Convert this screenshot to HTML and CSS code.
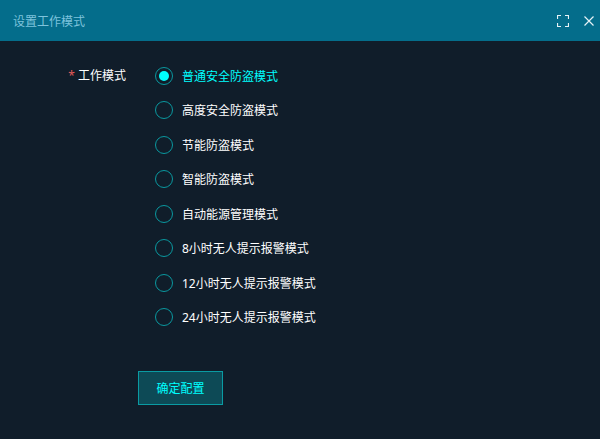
FILE: index.html
```html
<!DOCTYPE html>
<html lang="zh-CN">
<head>
    <meta charset="UTF-8">
    <meta name="viewport" content="width=device-width, initial-scale=1.0">
    <title>设置工作模式</title>
    <link rel="stylesheet" href="styles.css">
</head>
<body>
    <div class="dialog">
        <div class="dialog-header">
            <span class="dialog-title">设置工作模式</span>
            <div class="dialog-tools">
                <!-- fullscreen -->
                <svg class="tool-icon" width="12" height="12" viewBox="0 0 12 12">
                    <path d="M0.5 4V0.5H4M8 0.5H11.5V4M11.5 8V11.5H8M4 11.5H0.5V8" fill="none" stroke="#e6f2f6" stroke-width="1.2"/>
                </svg>
                <!-- close -->
                <svg class="tool-icon" width="10" height="10" viewBox="0 0 10 10">
                    <path d="M0.5 0.5L9.5 9.5M9.5 0.5L0.5 9.5" fill="none" stroke="#e6f2f6" stroke-width="1.2"/>
                </svg>
            </div>
        </div>
        <div class="dialog-body">
            <div class="form-row">
                <label class="form-label"><span class="required">*</span>工作模式</label>
                <div class="radio-list">
                    <div class="radio-item checked"><span class="radio-dot"></span><span>普通安全防盗模式</span></div>
                    <div class="radio-item"><span class="radio-dot"></span><span>高度安全防盗模式</span></div>
                    <div class="radio-item"><span class="radio-dot"></span><span>节能防盗模式</span></div>
                    <div class="radio-item"><span class="radio-dot"></span><span>智能防盗模式</span></div>
                    <div class="radio-item"><span class="radio-dot"></span><span>自动能源管理模式</span></div>
                    <div class="radio-item"><span class="radio-dot"></span><span>8小时无人提示报警模式</span></div>
                    <div class="radio-item"><span class="radio-dot"></span><span>12小时无人提示报警模式</span></div>
                    <div class="radio-item"><span class="radio-dot"></span><span>24小时无人提示报警模式</span></div>
                </div>
            </div>
            <button class="confirm-button">确定配置</button>
        </div>
    </div>
</body>
</html>
```

FILE: styles.css
```css
body {
    margin: 0;
    padding: 0;
    background-color: #101d2a;
    font-family: "Noto Sans", "Noto Sans CJK SC", sans-serif;
    font-size: 12px;
    color: #ffffff;
}
.dialog {
    width: 600px;
    height: 439px;
    overflow: hidden;
}
.dialog-header {
    display: flex;
    justify-content: space-between;
    align-items: center;
    height: 41px;
    padding: 0 6px 0 13px;
    box-sizing: border-box;
    background-color: #046d8b;
}
.dialog-title {
    color: #7ec3dc;
}
.dialog-tools {
    display: flex;
    align-items: center;
    gap: 15px;
}
.tool-icon {
    display: block;
}
.dialog-body {
    padding-top: 17.4px;
}
.form-row {
    display: flex;
}
.form-label {
    width: 126px;
    height: 35px;
    line-height: 35px;
    text-align: right;
    margin-right: 29px;
}
.required {
    color: #e05a5a;
    margin-right: 3px;
}
.radio-list {
    display: flex;
    flex-direction: column;
}
.radio-item {
    display: flex;
    align-items: center;
    gap: 9px;
    height: 34.5px;
}
.radio-dot {
    box-sizing: border-box;
    width: 18px;
    height: 18px;
    border: 1px solid #0a989f;
    border-radius: 50%;
    display: flex;
    align-items: center;
    justify-content: center;
}
.checked {
    color: #00ffff;
}
.checked .radio-dot::after {
    content: "";
    width: 10px;
    height: 10px;
    border-radius: 50%;
    background-color: #00ffff;
}
.confirm-button {
    display: block;
    width: 85px;
    height: 34px;
    margin: 36.6px 0 0 138px;
    background-color: #0d4a56;
    border: 1px solid #0a9ba3;
    color: #00ffff;
    font-family: inherit;
    font-size: 12px;
    padding: 0;
}
```
